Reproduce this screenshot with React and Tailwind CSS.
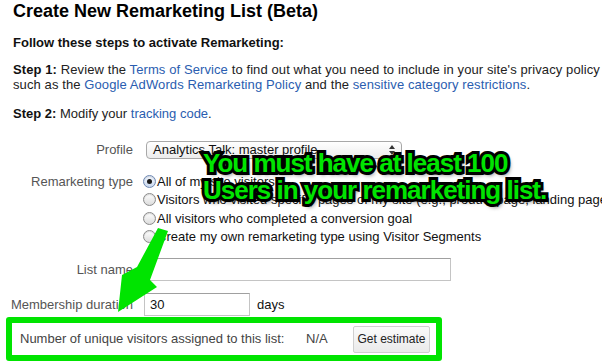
import React from 'react';

function Radio({ checked }) {
    return (
        <span className={`relative inline-flex h-[13px] w-[13px] shrink-0 items-center justify-center rounded-full border bg-gradient-to-b shadow-[inset_0_1px_1px_rgba(0,0,0,0.15)] ${checked ? 'border-[#6d88b3] from-[#f4f8ff] to-[#c9d8ef]' : 'border-[#8a8a8a] from-[#ffffff] to-[#dcdcdc]'}`}>
            {checked && (
                <span className="h-[5px] w-[5px] rounded-full bg-[#1a1a1a]" />
            )}
        </span>
    );
}

function RadioRow({ checked, children }) {
    return (
        <div className="flex h-[18.5px] items-center gap-[1px] whitespace-nowrap text-[13px] text-[#111]">
            <Radio checked={checked} />
            <span>{children}</span>
        </div>
    );
}

function Label({ children }) {
    return (
        <div className="w-[133px] shrink-0 whitespace-nowrap text-right text-[13px] text-[#555]">
            {children}
        </div>
    );
}

export default function App() {
    return (
        <div className="relative h-[361px] w-[602px] overflow-hidden bg-white font-['Liberation_Sans',Arial,sans-serif] text-[#222]">
            <div className="pl-[13px]">
                {/* Heading */}
                <h1 className="whitespace-nowrap text-[18px] font-bold leading-[22px] text-black">
                    Create New Remarketing List (Beta)
                </h1>

                <p className="mt-[13px] whitespace-nowrap text-[13px] font-bold leading-[16px] text-[#111]">
                    Follow these steps to activate Remarketing:
                </p>

                <p className="mt-[11px] whitespace-nowrap text-[13px] leading-[15px] tracking-[0.1px]">
                    <b className="text-[#111]">Step 1:</b> Review the <span className="text-[#2a5db0]">Terms of Service</span> to find out what you need to include in your site's privacy policy
                    <br />
                    such as the <span className="text-[#2a5db0]">Google AdWords Remarketing Policy</span> and the <span className="text-[#2a5db0]">sensitive category restrictions</span>.
                </p>

                <p className="mt-[14px] whitespace-nowrap text-[13px] leading-[15px]">
                    <b className="text-[#111]">Step 2:</b> Modify your <span className="text-[#2a5db0]">tracking code</span>.
                </p>
            </div>

            {/* Form */}
            <div className="mt-[20px]">
                <div className="flex h-[18px] items-center">
                    <Label>Profile</Label>
                    <div className="relative ml-[13px] flex h-[18px] w-[256px] items-center rounded-[4px] border border-[#a8a8a8] bg-gradient-to-b from-[#ffffff] to-[#ececec] pl-[6px] text-[13px] text-[#111]">
                        Analytics Talk: master profile
                        <span className="absolute right-[6px] top-[3px] flex flex-col items-center gap-[2px]">
                            <span className="h-0 w-0 border-x-[3px] border-b-[4px] border-x-transparent border-b-[#333]" />
                            <span className="h-0 w-0 border-x-[3px] border-t-[4px] border-x-transparent border-t-[#333]" />
                        </span>
                    </div>
                </div>

                <div className="mt-[13px] flex">
                    <div className="flex h-[18.5px] items-center">
                        <Label>Remarketing type</Label>
                    </div>
                    <div className="ml-[10px] flex flex-col">
                        <RadioRow checked>All of my site visitors</RadioRow>
                        <RadioRow>Visitors who visited specific pages of my site (e.g., product page, landing page)</RadioRow>
                        <RadioRow>All visitors who completed a conversion goal</RadioRow>
                        <RadioRow>Create my own remarketing type using Visitor Segments</RadioRow>
                    </div>
                </div>

                <div className="mt-[12px] flex h-[23px] items-center">
                    <Label>List name</Label>
                    <div className="ml-[11px] h-[23px] w-[307px] border border-[#c4c4c4] border-t-[#a0a0a0] bg-white" />
                </div>

                <div className="mt-[12px] flex h-[23px] items-center">
                    <Label>Membership duration</Label>
                    <div className="ml-[11px] flex h-[23px] w-[106px] items-center border border-[#c4c4c4] border-t-[#a0a0a0] bg-white pl-[5px] text-[13px] text-[#111]">
                        30
                    </div>
                    <span className="ml-[7px] text-[13px] text-[#111]">days</span>
                </div>

                {/* Highlighted estimate box */}
                <div className="ml-[6px] mt-[1px] flex h-[44px] w-[436px] items-center rounded-[3px] border-[6px] border-[#00e400] bg-white pl-[8px] pr-[6px] text-[13px] text-[#444]">
                    <span className="w-[286px] whitespace-nowrap">Number of unique visitors assigned to this list:</span>
                    <span>N/A</span>
                    <button className="ml-auto h-[27px] w-[77px] rounded-[2px] border border-[#cfcfcf] bg-gradient-to-b from-[#fbfbfb] to-[#eaeaea] text-[12px] text-[#222]">
                        Get estimate
                    </button>
                </div>
            </div>

            {/* Annotation arrow */}
            <svg className="pointer-events-none absolute left-0 top-0" width="602" height="361" viewBox="0 0 602 361">
                <polygon points="158,228 168,231 150,280 157,287 118,312 122,275 137,267" fill="#00e400" />
            </svg>

            {/* Annotation text */}
            <div className="pointer-events-none absolute left-[203px] top-[150px] whitespace-nowrap text-[26px] font-bold leading-[27px] tracking-[-1px] text-[#00e400] [-webkit-text-stroke:6px_#000] [paint-order:stroke_fill] [text-shadow:2px_3px_4px_rgba(0,0,0,0.6)]">
                You must have at least 100
                <br />
                Users in your remarketing list.
            </div>
        </div>
    );
}
